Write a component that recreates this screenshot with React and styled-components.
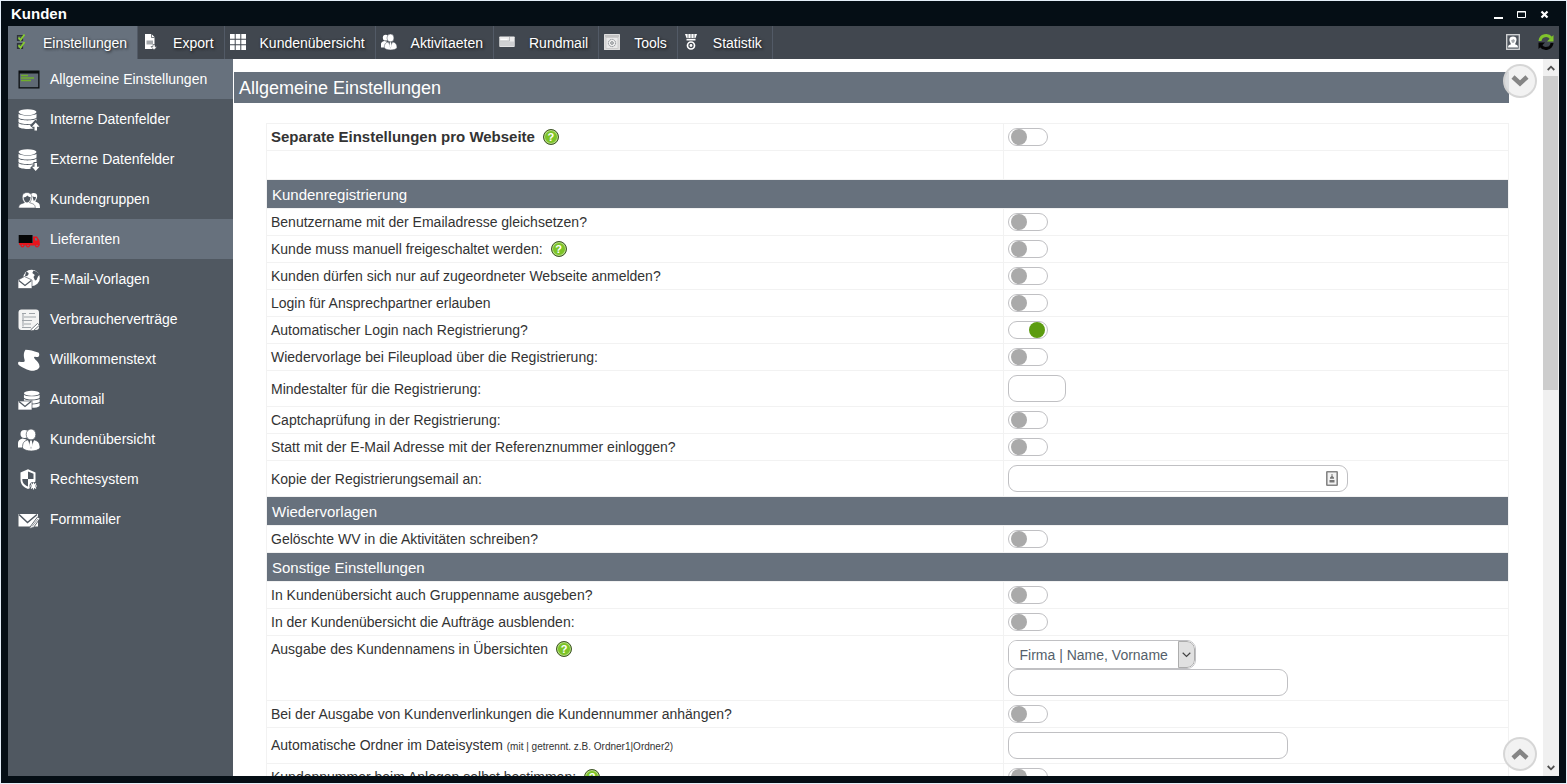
import React, { useState } from 'react';
import styled, { createGlobalStyle } from 'styled-components';

const GlobalStyle = createGlobalStyle`
    * {
        box-sizing: border-box;
    }

    body {
        margin: 0;
        background-color: #e4eef8;
        color: #333;
        font-family: "Liberation Sans", Arial, sans-serif;
        font-size: 14px;
        line-height: 18px;
    }

    button, input, select {
        margin: 0;
        padding: 0;
        font: inherit;
    }
`
const Desktop = styled.div`
    height: 100vh;
    padding: 1px;
`
const Window = styled.div`
    height: 100%;
    display: flex;
    flex-direction: column;
    padding: 0 7px 7px 7px;
    background-color: #050e15;
`
const TitleBar = styled.header`
    height: 25px;
    flex: none;
    display: flex;
    align-items: center;
    justify-content: space-between;
    padding: 0 6px 0 3px;
    color: white;
`
const WindowTitle = styled.h1`
    margin: 0;
    font-size: 15px;
    font-weight: bold;
`
const WindowButtons = styled.div`
    display: flex;
    gap: 7px;
`
const PlainButton = styled.button`
    display: flex;
    border: none;
    background: none;
    cursor: pointer;
`
const Toolbar = styled.nav`
    height: 33px;
    flex: none;
    display: flex;
    background-color: #41474f;
`
const Tab = styled.a`
    display: flex;
    align-items: center;
    padding: 0 10px 0 5px;
    border-right: solid 1px #525a66;
    background-color: ${props => props.$active ? '#67717d' : 'transparent'};
    color: white;
    text-decoration: none;
    text-shadow: 1px 1px 3px #111;

    svg {
        margin-right: 14px;
        margin-bottom: 1px;
    }
`
const ToolbarActions = styled.div`
    display: flex;
    align-items: center;
    gap: 17px;
    margin-left: auto;
    padding: 0 5px 2px 0;
`
const Main = styled.div`
    flex: 1;
    min-height: 0;
    display: flex;
    background-color: white;
`
const Sidebar = styled.nav`
    width: 225px;
    flex: none;
    background-color: #505861;
`
const SideLink = styled.a`
    height: 40px;
    display: flex;
    align-items: center;
    gap: 10px;
    padding-left: 10px;
    background-color: ${props => props.$active ? '#67717d' : 'transparent'};
    color: white;
    text-decoration: none;

    svg {
        margin-top: 2px;
    }
`
const Content = styled.main`
    position: relative;
    flex: 1;
    min-width: 0;
    overflow: hidden;
    padding: 13px 34px 0 1px;
`
const PageTitle = styled.h2`
    margin: 0;
    padding: 1px 5px 0 5px;
    background-color: #67717d;
    color: white;
    font-size: 18px;
    font-weight: normal;
    line-height: 30px;
`
const SettingsTable = styled.table`
    width: calc(100% - 32px);
    margin: 20px 0 0 32px;
    table-layout: fixed;
    border-spacing: 0;
    border-top: solid 1px #f2f2f2;
    border-left: solid 1px #f2f2f2;
`
const LabelColumn = styled.col`
    width: 59.3%;
`
const SectionCell = styled.th`
    height: 29px;
    padding: 2px 5px 0 5px;
    border-right: solid 1px #f2f2f2;
    border-bottom: solid 1px #f2f2f2;
    background-color: #67717d;
    background-clip: padding-box;
    color: white;
    font-size: 15px;
    font-weight: normal;
    text-align: left;
`
const Cell = styled.td`
    height: ${props => props.$blank ? '29px' : '27px'};
    padding: 4px;
    border-right: solid 1px #f2f2f2;
    border-bottom: solid 1px #f2f2f2;
    vertical-align: ${props => props.$top ? 'top' : 'middle'};
`
const LabelLine = styled.div`
    display: flex;
    align-items: center;
    gap: 8px;
    font-size: ${props => props.$bold ? '15px' : '14px'};
    font-weight: ${props => props.$bold ? 'bold' : 'normal'};
`
const Hint = styled.small`
    font-size: 10px;
`
const HelpButton = styled.button`
    width: 16px;
    height: 16px;
    border: solid 1px #42552c;
    border-radius: 50%;
    box-shadow: inset 0 0 0 1px #b9dd8c;
    background-color: #7dc427;
    color: white;
    font-size: 11px;
    font-weight: bold;
    line-height: 14px;
    text-align: center;
    cursor: pointer;
`
const Toggle = styled.input`
    display: flex;
    align-items: center;
    appearance: none;
    width: 40px;
    height: 18px;
    padding: 0 2px;
    border: solid 1px #c0c0c3;
    border-radius: 9px;
    background-color: white;
    cursor: pointer;

    &::before {
        content: '';
        width: 16px;
        height: 16px;
        border-radius: 50%;
        background-color: #aaa;
    }

    &:checked::before {
        margin-left: auto;
        background-color: #5c9c10;
    }
`
const Field = styled.div`
    display: flex;
    align-items: center;
    width: ${props => props.$width};
    height: 27px;
    padding: 0 9px;
    border: solid 1px #c0c0c3;
    border-radius: 9px;
`
const TextInput = styled.input`
    flex: 1;
    min-width: 0;
    border: none;
    outline: none;
    background: none;
    color: #555;
`
const SelectBox = styled.div`
    width: 188px;
    height: 29px;
    display: grid;
    grid-template-columns: 1fr 17px;
    overflow: hidden;
    border: solid 1px #c0c0c3;
    border-radius: 9px;
`
const Select = styled.select`
    grid-row: 1;
    grid-column: 1 / 3;
    appearance: none;
    padding-left: 11px;
    border: none;
    background-color: white;
    color: #555f6b;
`
const SelectArrow = styled.span`
    grid-row: 1;
    grid-column: 2;
    display: flex;
    align-items: center;
    justify-content: center;
    border: solid 1px #adadad;
    border-radius: 0 8px 8px 0;
    background-color: #e1e1e1;
    pointer-events: none;
`
const Scrollbar = styled.div`
    width: 16px;
    flex: none;
    display: flex;
    flex-direction: column;
    justify-content: space-between;
    background-color: #f0f0f0;
`
const ScrollArrow = styled.button`
    height: 17px;
    display: flex;
    align-items: center;
    justify-content: center;
    border: none;
    background: none;
`
const ScrollTrack = styled.div`
    flex: 1;
`
const ScrollThumb = styled.div`
    width: 15px;
    height: 46%;
    background-color: #cdcdcd;
`
const JumpButton = styled.button`
    position: absolute;
    right: 6px;
    ${props => props.$bottom ? 'bottom: 5px;' : 'top: 5px;'}
    width: 34px;
    height: 34px;
    display: flex;
    align-items: center;
    justify-content: center;
    border: solid 2px rgba(205, 205, 205, 0.75);
    border-radius: 50%;
    background-color: rgba(240, 240, 240, 0.85);
    cursor: pointer;
`

function Icon({ size = 22, box = 22, children }) {
    return (
        <svg width={size} height={size} viewBox={`0 0 ${box} ${box}`} fill='white' aria-hidden='true'>
            {children}
        </svg>
    )
}

const dbStack = (
    <>
        <ellipse cx='9.5' cy='3.1' rx='9' ry='2.9' />
        <path d='M.5 4.800c2 2.400 16 2.400 18 0v3.600c-2 2.700-16 2.700-18 0zM.5 9.500c2 2.500 16 2.500 18 0v3.500c-2 2.700-16 2.700-18 0zM.5 14.100c2 2.500 16 2.500 18 0v3.600c-2 3-16 3-18 0z' />
    </>
)

const people = (
    <>
        <circle cx='6.5' cy='5' r='4' />
        <path d='M0 18.500v-4.500c0-2.500 1.500-3.500 4.500-4.500l4 1-2.500 8z' />
        <ellipse cx='13' cy='5.500' rx='4.800' ry='5.500' stroke='#4c545d' strokeWidth='.7' />
        <path d='M4.500 19c0-4.500 1-7 5-8h7c4 1 5.500 3.500 5.500 8-3 4-14.500 4-17.500 0z' stroke='#4c545d' strokeWidth='.7' />
        <path d='M10 11h6l-3 9z' fill='#4c545d' />
        <path d='M12.200 11.500h1.600l.9 4.500-1.700 3.500-1.700-3.500z' />
    </>
)

const envelope = (
    <>
        <rect x='0' y='12' width='14' height='9' stroke='#505861' strokeWidth='.7' />
        <path d='M1 12.500l6 5 6-5' fill='none' stroke='#505861' strokeWidth='1.3' />
    </>
)

const icons = {
    window: (
        <>
            <rect x='.5' y='1.500' width='21' height='18' fill='#0b0e11' />
            <rect x='1.800' y='4.500' width='18.400' height='13.700' fill='#5f6974' />
            <path d='M3 6.500h7M3 9h13M3 11.500h10' stroke='#6fae2b' strokeWidth='1.600' />
        </>
    ),
    dbUp: (
        <>
            {dbStack}
            <path d='M17.500 22v-7M13.500 18l4-4.500 4 4.500' fill='none' stroke='#505861' strokeWidth='4' />
            <path d='M14 17.800l3.700-4.300 3.800 4.300h-2.500v3.700h-2.500v-3.700z' />
        </>
    ),
    dbDown: (
        <>
            {dbStack}
            <path d='M17.500 13v8M13.500 17.500l4 4 4-4' fill='none' stroke='#505861' strokeWidth='4' />
            <path d='M14 17.700l3.700 4.300 3.800-4.300h-2.500v-3.700h-2.500v3.700z' />
        </>
    ),
    groups: (
        <g transform='translate(0 1)'>
            <path d='M12 7c0-3 1.500-4 3.700-4 3.500 0 4.300 3 2.800 6l-1.200 2.500c3.500 1.200 4.700 2.200 4.700 6.500H12z' />
            <path d='M.7 18c.2-3.500 1.500-4 5.700-5.300C2.500 7.500 4.200 2.500 9 2.500s6.500 5 2.600 10.200c4.200 1.300 5.500 1.800 5.700 5.300z' stroke='#505861' strokeWidth='.6' />
            <path d='M5.500 7.500c1.500 0 2.700-.8 4-2 .8 1 2 1.500 3.200 1.700-.5 3.500-2 5.300-3.700 5.300S6 10.500 5.500 7.500z' fill='#505861' />
            <path d='M14.500 6.300c1 .8 2.500 1 3.500.5-.2 2.500-1 4-2.400 4z' fill='#505861' />
        </g>
    ),
    truck: (
        <g transform='translate(0 1)'>
            <path d='M1 14.500V13h14V6.500h4l2.500 4 .5 5H21a2 2 0 0 1-4 0h-5a2 2 0 0 1-4 0H6.500a2 2 0 0 1-4 0z' fill='#e8141c' />
            <rect x='.7' y='5' width='13.800' height='8' fill='#050505' />
            <path d='M17 8h1.500l1 2.500H17z' fill='#67717d' />
            <circle cx='4.500' cy='15.500' r='.8' fill='#67717d' />
            <circle cx='10' cy='15.500' r='.8' fill='#67717d' />
            <circle cx='19' cy='15.500' r='.8' fill='#67717d' />
        </g>
    ),
    mailGlobe: (
        <>
            <circle cx='13.500' cy='9' r='8.300' />
            <path d='M8 3c2-.2 3 .8 2.500 2.200S8.500 7.500 7 7zM15.500 1.500l-1.200 2.500 2.500 2-1.300 2 1.500 3.500 1.500-.5 1.500-3.500 1.300-1.500C21 4 18.500 2 15.500 1.500z' fill='#505861' />
            <path d='M0 11l6.500-3.500L14 11v8.500H0z' stroke='#505861' strokeWidth='.7' />
            <path d='M.8 11.500l6.200 5 6.300-5' fill='none' stroke='#505861' strokeWidth='1.200' />
        </>
    ),
    contract: (
        <>
            <rect x='.5' y='.5' width='20.500' height='20.500' rx='3' fill='#f4f4f4' />
            <path d='M4 4.500h4M11 4.500h6M6 8h12M4 11.500h10M6 15h7M4 18.500h9M5 4.500v13' fill='none' stroke='#a0a5aa' strokeWidth='1.100' />
            <path d='M13 20.500l6.500-6 2 1.700-6 5.300-3 .5z' stroke='#505861' strokeWidth='.8' />
        </>
    ),
    scroll: (
        <path d='M7.500.7c4 .2 8 1 12.700 2.800 1.500.6 1.500 4.300-.5 4.500-1.500.2-2.400-.7-3.400 0-.8.800.3 1.800 1.500 3 1.200 1.200 3.900 3.500 3.700 6.500-.3 3.500-5.500 4.700-9.500 4C8.200 20.800 3 17.500.8 16c-1-.9-1-3 .2-3.300 1.500-.3 3 .8 5.200 0 1-.5.300-2-.1-3.800-.6-2.800-.3-6.200 1.400-8.200z' />
    ),
    automail: (
        <>
            <g transform='translate(5.500 1.500) scale(.87)'>{dbStack}</g>
            {envelope}
        </>
    ),
    people,
    shield: (
        <>
            <path d='M10 .3l7.500 3.300v6.900c0 5-3 7.500-7.500 9.500C5.500 18 2.500 15.500 2.500 10.500V3.600z' />
            <path d='M10 2.500l5.500 2.300V10H10zM10 10v7.500C6.500 16 4.300 14.200 4.300 10z' fill='#505861' />
            <circle cx='15.500' cy='17' r='4' fill='#505861' />
            <path d='M15.500 13.500v7M12 17h7M13 14.500l5 5M18 14.500l-5 5' stroke='white' strokeWidth='1.200' />
        </>
    ),
    formMail: (
        <>
            <path d='M.5 5h19.500v12.500H.5z' />
            <path d='M1 5.500l8.500 8 9.500-8' fill='none' stroke='#505861' strokeWidth='1.500' />
            <path d='M12 18l7.500-10 2.500 1.500-6.500 9-4 1z' stroke='#505861' strokeWidth='.9' />
            <path d='M14 17.500l6-7.500' stroke='#505861' strokeWidth='.6' />
        </>
    ),
    checks: (
        <g transform='translate(3 0)'>
            <path d='M1.500 1.500h5v5h-5zM1.500 9.500h5v5h-5z' fill='#4a5159' stroke='#2d3338' strokeWidth='1.200' />
            <path d='M2.500 3.500L4.500 6l4-5.500M2.500 11.200l2 2.600 4-5.800' fill='none' stroke='#87cc30' strokeWidth='1.800' />
        </g>
    ),
    exportFile: (
        <g transform='translate(1 0)'>
            <path d='M1 0h6.500l3 3v9.500l1 2.500H1z' />
            <path d='M7.500 0v3.500h3' fill='none' stroke='#41474f' strokeWidth='.7' />
            <path d='M2.500 6.500h6.500v4h-6.500z' fill='#a5a9ad' />
            <path d='M9 10.500h2v2h2L10 16l-3-3.500h2z' stroke='#41474f' strokeWidth='.6' />
        </g>
    ),
    grid: (
        <path d='M0 0h4.700v4.700H0zM5.700 0h4.600v4.700H5.700zM11.300 0H16v4.700h-4.700zM0 5.700h4.700v4.600H0zM5.700 5.700h4.600v4.600H5.700zM11.300 5.700H16v4.600h-4.700zM0 11.300h4.700V16H0zM5.700 11.300h4.600V16H5.700zM11.300 11.300H16V16h-4.700z' />
    ),
    card: (
        <>
            <rect x='.3' y='2.500' width='15.400' height='10.500' rx='.7' fill='#ececec' />
            <path d='M1 7.500h14v4.800H1z' fill='#cfd0d2' />
            <path d='M1.500 5.500h7' stroke='#fff' strokeWidth='1.500' />
            <path d='M1 7h9.500M10.500 3v4' fill='none' stroke='#a9acb0' strokeWidth='.7' />
        </>
    ),
    tools: (
        <>
            <rect x='0' y='0' width='16' height='16' rx='.5' fill='#dedede' />
            <path d='M1 2h14' stroke='#a5a5a5' />
            <rect x='2' y='3.500' width='12' height='11' fill='#e9e9e9' stroke='#bbb' strokeWidth='.6' />
            <circle cx='8' cy='9' r='3.600' fill='#f0f0f0' stroke='#8a8e92' strokeDasharray='1.500 .5' />
            <circle cx='8' cy='9' r='1.300' fill='none' stroke='#72777c' strokeWidth='.9' />
        </>
    ),
    statistic: (
        <>
            <path d='M2 0h12l-1.500 4h-9z' />
            <path d='M5 0v4M8 0v4M11 0v4' stroke='#41474f' strokeWidth='.7' />
            <path d='M3.500 4.800h9v1.700h-9z' />
            <circle cx='8' cy='11.500' r='3.500' fill='none' stroke='white' strokeWidth='1.700' />
            <circle cx='8' cy='11.500' r='1.400' />
        </>
    )
}

const tabs = [
    { name: 'Einstellungen', icon: 'checks', active: true },
    { name: 'Export', icon: 'exportFile' },
    { name: 'Kundenübersicht', icon: 'grid' },
    { name: 'Aktivitaeten', icon: 'people', box: 22 },
    { name: 'Rundmail', icon: 'card' },
    { name: 'Tools', icon: 'tools' },
    { name: 'Statistik', icon: 'statistic' }
]

const sideLinks = [
    { name: 'Allgemeine Einstellungen', icon: 'window', active: true },
    { name: 'Interne Datenfelder', icon: 'dbUp' },
    { name: 'Externe Datenfelder', icon: 'dbDown' },
    { name: 'Kundengruppen', icon: 'groups' },
    { name: 'Lieferanten', icon: 'truck', active: true },
    { name: 'E-Mail-Vorlagen', icon: 'mailGlobe' },
    { name: 'Verbraucherverträge', icon: 'contract' },
    { name: 'Willkommenstext', icon: 'scroll' },
    { name: 'Automail', icon: 'automail' },
    { name: 'Kundenübersicht', icon: 'people' },
    { name: 'Rechtesystem', icon: 'shield' },
    { name: 'Formmailer', icon: 'formMail' }
]

const rows = [
    { label: 'Separate Einstellungen pro Webseite', bold: true, help: true },
    { blank: true },
    { section: 'Kundenregistrierung' },
    { label: 'Benutzername mit der Emailadresse gleichsetzen?' },
    { label: 'Kunde muss manuell freigeschaltet werden:', help: true },
    { label: 'Kunden dürfen sich nur auf zugeordneter Webseite anmelden?' },
    { label: 'Login für Ansprechpartner erlauben' },
    { label: 'Automatischer Login nach Registrierung?', on: true },
    { label: 'Wiedervorlage bei Fileupload über die Registrierung:' },
    { label: 'Mindestalter für die Registrierung:', type: 'text', width: '58px' },
    { label: 'Captchaprüfung in der Registrierung:' },
    { label: 'Statt mit der E-Mail Adresse mit der Referenznummer einloggen?' },
    { label: 'Kopie der Registrierungsemail an:', type: 'text', width: '340px', contact: true },
    { section: 'Wiedervorlagen' },
    { label: 'Gelöschte WV in die Aktivitäten schreiben?' },
    { section: 'Sonstige Einstellungen' },
    { label: 'In Kundenübersicht auch Gruppenname ausgeben?' },
    { label: 'In der Kundenübersicht die Aufträge ausblenden:' },
    { label: 'Ausgabe des Kundennamens in Übersichten', type: 'select', help: true },
    { label: 'Bei der Ausgabe von Kundenverlinkungen die Kundennummer anhängen?' },
    { label: 'Automatische Ordner im Dateisystem', hint: '(mit | getrennt. z.B. Ordner1|Ordner2)', type: 'text', width: '280px' },
    { label: 'Kundennummer beim Anlegen selbst bestimmen:', help: true }
]

function Chevron({ up }) {
    return (
        <svg width='18' height='12' viewBox='0 0 18 12' aria-hidden='true'>
            <path d={up ? 'M2 10l7-6.500 7 6.500' : 'M2 2l7 6.500L16 2'} fill='none' stroke='#858585' strokeWidth='4.500' />
        </svg>
    )
}

function ScrollChevron({ up }) {
    return (
        <svg width='8' height='6' viewBox='0 0 8 6' aria-hidden='true'>
            <path d={up ? 'M.7 5L4 1.700 7.300 5' : 'M.7 1L4 4.300 7.300 1'} fill='none' stroke='#505050' strokeWidth='1.800' />
        </svg>
    )
}

function Control({ row, id }) {
    const [checked, setChecked] = useState(Boolean(row.on))

    if (row.type === 'select') {
        return (
            <>
                <SelectBox>
                    <Select id={id}>
                        <option>Firma | Name, Vorname</option>
                    </Select>
                    <SelectArrow>
                        <svg width='9' height='6' viewBox='0 0 9 6'>
                            <path d='M.7.8l3.800 3.700L8.300.8' fill='none' stroke='#444' strokeWidth='1.200' />
                        </svg>
                    </SelectArrow>
                </SelectBox>
                <Field $width='280px'>
                    <TextInput type='text' aria-label={row.label} />
                </Field>
            </>
        )
    }

    if (row.type === 'text') {
        return (
            <Field $width={row.width}>
                <TextInput id={id} type='text' />
                {row.contact &&
                    <svg width='12' height='15' viewBox='0 0 12 15' aria-hidden='true'>
                        <rect x='.8' y='.8' width='10.400' height='13.400' rx='.5' fill='#f2f2f2' stroke='#858585' strokeWidth='1.600' />
                        <path d='M5.500 3h1v2L8 6.500v1.200H4V6.500L5.500 5zM3.500 9h5v2.500h-5z' fill='#777' />
                    </svg>
                }
            </Field>
        )
    }

    return <Toggle id={id} type='checkbox' checked={checked} onChange={() => setChecked(!checked)} />
}

function Row({ row, id }) {
    if (row.section) {
        return <tr><SectionCell colSpan={2}>{row.section}</SectionCell></tr>
    }

    if (row.blank) {
        return <tr><Cell $blank /><Cell $blank /></tr>
    }

    return (
        <tr>
            <Cell $top={row.type === 'select'}>
                <LabelLine $bold={row.bold}>
                    <label htmlFor={id}>
                        {row.label} {row.hint && <Hint>{row.hint}</Hint>}
                    </label>
                    {row.help && <HelpButton type='button' aria-label='Hilfe'>?</HelpButton>}
                </LabelLine>
            </Cell>
            <Cell><Control row={row} id={id} /></Cell>
        </tr>
    )
}

function App() {
    return (
        <Desktop>
            <GlobalStyle />
            <Window>
                <TitleBar>
                    <WindowTitle>Kunden</WindowTitle>
                    <WindowButtons>
                        <PlainButton aria-label='Minimieren'>
                            <svg width='16' height='14' viewBox='0 0 16 14'><path d='M3 11h9' stroke='white' strokeWidth='2' /></svg>
                        </PlainButton>
                        <PlainButton aria-label='Maximieren'>
                            <svg width='16' height='14' viewBox='0 0 16 14'><path d='M3.500 4.500h8v6h-8zM3 5h9' fill='none' stroke='white' /></svg>
                        </PlainButton>
                        <PlainButton aria-label='Schließen'>
                            <svg width='16' height='14' viewBox='0 0 16 14'><path d='M4.500 4.500l6 6M10.500 4.500l-6 6' stroke='white' strokeWidth='2.200' /></svg>
                        </PlainButton>
                    </WindowButtons>
                </TitleBar>
                <Toolbar>
                    {tabs.map(tab =>
                        <Tab key={tab.name} href='#' $active={tab.active}>
                            <Icon size={16} box={tab.box || 16}>{icons[tab.icon]}</Icon>
                            {tab.name}
                        </Tab>
                    )}
                    <ToolbarActions>
                        <PlainButton aria-label='Benutzer'>
                            <Icon size={16} box={16}>
                                <rect x='1.700' y='.7' width='12.600' height='14.600' fill='#50565e' stroke='#d5d7d9' strokeWidth='1.300' />
                                <path d='M8 2.500c4 0 4 3.500 3 5.500l-1 2.300c2 .4 3 1.200 3 3.200H3c0-2 1-2.800 3-3.200L5 8c-1-2-1-5.500 3-5.500z' />
                                <path d='M6.200 6c1 0 1.700-.3 2.300-1 .4.600.8.900 1.400 1-.2 2-.9 3-1.900 3s-1.600-1-1.800-3z' fill='#a8abaf' />
                            </Icon>
                        </PlainButton>
                        <PlainButton aria-label='Aktualisieren'>
                            <Icon size={16} box={16}>
                                <path d='M2 7c.5-6 8-7 11-3' fill='none' stroke='#80c32c' strokeWidth='3' />
                                <path d='M15.500 1v6.500H9z' fill='#80c32c' />
                                <path d='M14 9c-.5 6-8 7-11 3' fill='none' stroke='#050505' strokeWidth='3' />
                                <path d='M.5 15V8.500H7z' fill='#050505' />
                            </Icon>
                        </PlainButton>
                    </ToolbarActions>
                </Toolbar>
                <Main>
                    <Sidebar>
                        {sideLinks.map(link =>
                            <SideLink key={link.name} href='#' $active={link.active}>
                                <Icon>{icons[link.icon]}</Icon>
                                {link.name}
                            </SideLink>
                        )}
                    </Sidebar>
                    <Content>
                        <PageTitle>Allgemeine Einstellungen</PageTitle>
                        <SettingsTable>
                            <colgroup>
                                <LabelColumn />
                                <col />
                            </colgroup>
                            <tbody>
                                {rows.map((row, index) =>
                                    <Row key={index} row={row} id={`setting-${index}`} />
                                )}
                            </tbody>
                        </SettingsTable>
                        <JumpButton aria-label='Nach unten'><Chevron /></JumpButton>
                        <JumpButton $bottom aria-label='Nach oben'><Chevron up /></JumpButton>
                    </Content>
                    <Scrollbar>
                        <ScrollArrow aria-label='Hoch'><ScrollChevron up /></ScrollArrow>
                        <ScrollTrack><ScrollThumb /></ScrollTrack>
                        <ScrollArrow aria-label='Runter'><ScrollChevron /></ScrollArrow>
                    </Scrollbar>
                </Main>
            </Window>
        </Desktop>
    )
}

export default App;
